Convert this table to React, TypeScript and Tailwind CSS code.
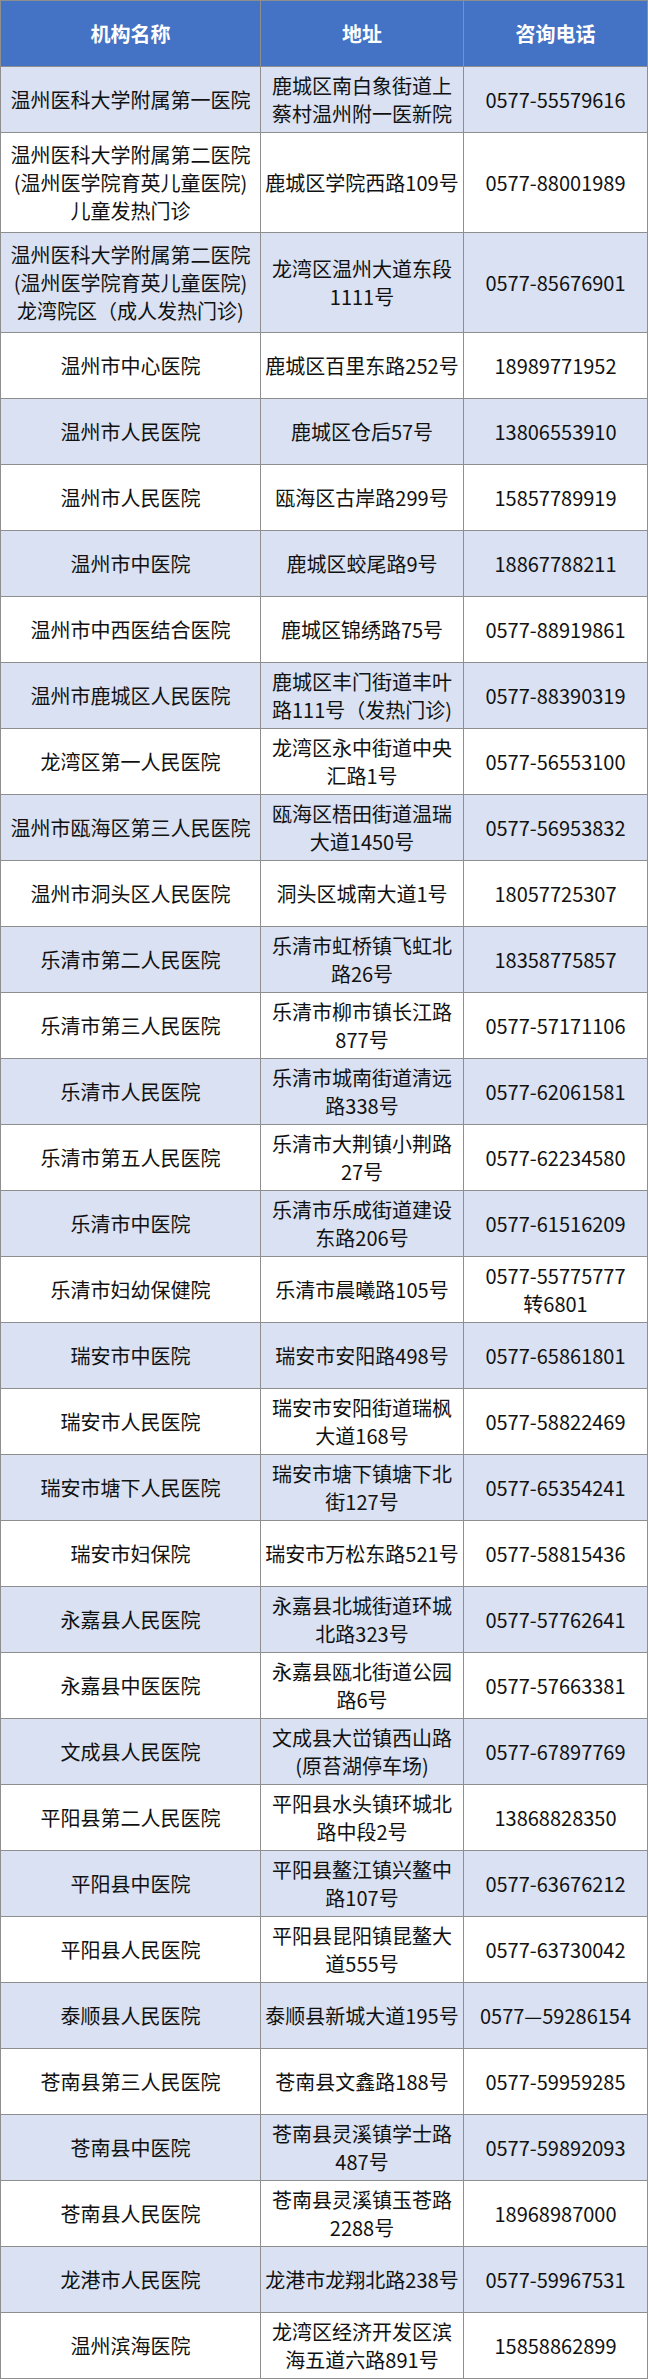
const ROWS: [string[], string[], string[]][] = [
  [["温州医科大学附属第一医院"], ["鹿城区南白象街道上", "蔡村温州附一医新院"], ["0577-55579616"]],
  [["温州医科大学附属第二医院", "(温州医学院育英儿童医院)", "儿童发热门诊"], ["鹿城区学院西路109号"], ["0577-88001989"]],
  [["温州医科大学附属第二医院", "(温州医学院育英儿童医院)", "龙湾院区（成人发热门诊)"], ["龙湾区温州大道东段", "1111号"], ["0577-85676901"]],
  [["温州市中心医院"], ["鹿城区百里东路252号"], ["18989771952"]],
  [["温州市人民医院"], ["鹿城区仓后57号"], ["13806553910"]],
  [["温州市人民医院"], ["瓯海区古岸路299号"], ["15857789919"]],
  [["温州市中医院"], ["鹿城区蛟尾路9号"], ["18867788211"]],
  [["温州市中西医结合医院"], ["鹿城区锦绣路75号"], ["0577-88919861"]],
  [["温州市鹿城区人民医院"], ["鹿城区丰门街道丰叶", "路111号（发热门诊)"], ["0577-88390319"]],
  [["龙湾区第一人民医院"], ["龙湾区永中街道中央", "汇路1号"], ["0577-56553100"]],
  [["温州市瓯海区第三人民医院"], ["瓯海区梧田街道温瑞", "大道1450号"], ["0577-56953832"]],
  [["温州市洞头区人民医院"], ["洞头区城南大道1号"], ["18057725307"]],
  [["乐清市第二人民医院"], ["乐清市虹桥镇飞虹北", "路26号"], ["18358775857"]],
  [["乐清市第三人民医院"], ["乐清市柳市镇长江路", "877号"], ["0577-57171106"]],
  [["乐清市人民医院"], ["乐清市城南街道清远", "路338号"], ["0577-62061581"]],
  [["乐清市第五人民医院"], ["乐清市大荆镇小荆路", "27号"], ["0577-62234580"]],
  [["乐清市中医院"], ["乐清市乐成街道建设", "东路206号"], ["0577-61516209"]],
  [["乐清市妇幼保健院"], ["乐清市晨曦路105号"], ["0577-55775777", "转6801"]],
  [["瑞安市中医院"], ["瑞安市安阳路498号"], ["0577-65861801"]],
  [["瑞安市人民医院"], ["瑞安市安阳街道瑞枫", "大道168号"], ["0577-58822469"]],
  [["瑞安市塘下人民医院"], ["瑞安市塘下镇塘下北", "街127号"], ["0577-65354241"]],
  [["瑞安市妇保院"], ["瑞安市万松东路521号"], ["0577-58815436"]],
  [["永嘉县人民医院"], ["永嘉县北城街道环城", "北路323号"], ["0577-57762641"]],
  [["永嘉县中医医院"], ["永嘉县瓯北街道公园", "路6号"], ["0577-57663381"]],
  [["文成县人民医院"], ["文成县大峃镇西山路", "(原苔湖停车场)"], ["0577-67897769"]],
  [["平阳县第二人民医院"], ["平阳县水头镇环城北", "路中段2号"], ["13868828350"]],
  [["平阳县中医院"], ["平阳县鳌江镇兴鳌中", "路107号"], ["0577-63676212"]],
  [["平阳县人民医院"], ["平阳县昆阳镇昆鳌大", "道555号"], ["0577-63730042"]],
  [["泰顺县人民医院"], ["泰顺县新城大道195号"], ["0577—59286154"]],
  [["苍南县第三人民医院"], ["苍南县文鑫路188号"], ["0577-59959285"]],
  [["苍南县中医院"], ["苍南县灵溪镇学士路", "487号"], ["0577-59892093"]],
  [["苍南县人民医院"], ["苍南县灵溪镇玉苍路", "2288号"], ["18968987000"]],
  [["龙港市人民医院"], ["龙港市龙翔北路238号"], ["0577-59967531"]],
  [["温州滨海医院"], ["龙湾区经济开发区滨", "海五道六路891号"], ["15858862899"]],
];

function Cell({ lines, last }: { lines: string[]; last?: boolean }) {
  return (
    <div
      className={`flex flex-col items-center justify-center border-b border-[#8e8e8e] text-center ${
        last ? "" : "border-r"
      }`}
    >
      {lines.map((l, i) => (
        <span key={i} className="whitespace-nowrap">
          {l}
        </span>
      ))}
    </div>
  );
}

export default function App() {
  return (
    <div
      className="w-[648px] bg-white text-[20px] leading-[28px] text-[#111]"
      style={{ fontFamily: '"Noto Sans CJK SC", "Noto Sans", sans-serif' }}
    >
      <div className="border-l border-t border-r border-[#8e8e8e]">
        <div className="grid h-[66px] grid-cols-[260px_203px_183px] bg-[#4472c4] font-bold text-white">
          <Cell lines={["机构名称"]} />
          <Cell lines={["地址"]} />
          <Cell lines={["咨询电话"]} last />
        </div>
        {ROWS.map(([name, addr, phone], i) => {
          const tall = name.length === 3;
          return (
            <div
              key={i}
              className={`grid grid-cols-[260px_203px_183px] ${tall ? "h-[100px]" : "h-[66px]"} ${
                i % 2 === 0 ? "bg-[#d9e1f2]" : "bg-white"
              }`}
            >
              <Cell lines={name} />
              <Cell lines={addr} />
              <Cell lines={phone} last />
            </div>
          );
        })}
      </div>
    </div>
  );
}
